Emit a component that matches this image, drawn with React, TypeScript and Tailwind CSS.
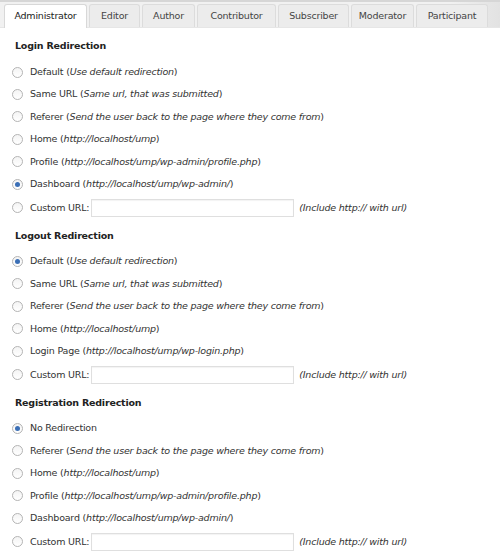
import React from 'react'

type Opt = { label: string; note?: string; checked?: boolean }

const tabs = [
  { name: 'Administrator', w: 'w-[83px]' },
  { name: 'Editor', w: 'w-[51px]' },
  { name: 'Author', w: 'w-[53px]' },
  { name: 'Contributor', w: 'w-[79px]' },
  { name: 'Subscriber', w: 'w-[71px]' },
  { name: 'Moderator', w: 'w-[63px]' },
  { name: 'Participant', w: 'w-[72px]' },
]

const sections: { title: string; options: Opt[] }[] = [
  {
    title: 'Login Redirection',
    options: [
      { label: 'Default', note: 'Use default redirection' },
      { label: 'Same URL', note: 'Same url, that was submitted' },
      { label: 'Referer', note: 'Send the user back to the page where they come from' },
      { label: 'Home', note: 'http://localhost/ump' },
      { label: 'Profile', note: 'http://localhost/ump/wp-admin/profile.php' },
      { label: 'Dashboard', note: 'http://localhost/ump/wp-admin/', checked: true },
    ],
  },
  {
    title: 'Logout Redirection',
    options: [
      { label: 'Default', note: 'Use default redirection', checked: true },
      { label: 'Same URL', note: 'Same url, that was submitted' },
      { label: 'Referer', note: 'Send the user back to the page where they come from' },
      { label: 'Home', note: 'http://localhost/ump' },
      { label: 'Login Page', note: 'http://localhost/ump/wp-login.php' },
    ],
  },
  {
    title: 'Registration Redirection',
    options: [
      { label: 'No Redirection', checked: true },
      { label: 'Referer', note: 'Send the user back to the page where they come from' },
      { label: 'Home', note: 'http://localhost/ump' },
      { label: 'Profile', note: 'http://localhost/ump/wp-admin/profile.php' },
      { label: 'Dashboard', note: 'http://localhost/ump/wp-admin/' },
    ],
  },
]

const Radio = ({ checked }: { checked?: boolean }) => (
  <span className="w-[11px] h-[11px] rounded-full border border-[#b4b4b4] bg-gradient-to-b from-[#f4f4f4] to-white flex items-center justify-center shrink-0">
    {checked && <span className="w-[5px] h-[5px] rounded-full bg-[#3b6fb6]" />}
  </span>
)

const Row = ({ opt }: { opt: Opt }) => (
  <div className="h-[22.4px] flex items-center">
    <Radio checked={opt.checked} />
    <span className="ml-[7px]">
      {opt.label}
      {opt.note && (
        <>
          {' ('}
          <i>{opt.note}</i>
          {')'}
        </>
      )}
    </span>
  </div>
)

const App = () => {
  return (
    <div
      className="w-[500px] h-[558px] bg-white text-[#333] text-[9.5px] tracking-[-0.2px] overflow-hidden"
      style={{ fontFamily: '"DejaVu Sans", Verdana, sans-serif' }}
    >
      <div className="h-[28px] bg-gradient-to-r from-[#f1f1f1] from-90% to-[#e2e2e2] border-t-2 border-[#d6d6d6] flex items-end pl-[4px] gap-[2px] border-b border-b-[#e6e6e6]">
        {tabs.map((t, i) => (
          <div
            key={t.name}
            className={
              t.w +
              (i === 0
                ? ' h-[24px] flex items-center justify-center bg-white border border-b-0 border-[#d8d8d8] rounded-t-[3px] text-[#222] -mb-px'
                : ' h-[23px] flex items-center justify-center bg-[#ececec] border border-b-0 border-[#dcdcdc] rounded-t-[3px] text-[#444]')
            }
          >
            {t.name}
          </div>
        ))}
      </div>
      <div className="pl-[12px]">
        {sections.map((s, i) => (
          <div key={s.title} className={i === 0 ? 'mt-[8px]' : 'mt-[6px]'}>
            <div className="h-5 flex items-center pl-[3px] font-bold text-[#222]">{s.title}</div>
            <div className={i === 0 ? 'mt-[5px]' : 'mt-1'}>
              {s.options.map((o) => (
                <Row key={o.label} opt={o} />
              ))}
              <div className="h-[25px] flex items-center">
                <Radio />
                <span className="ml-[7px]">Custom URL:</span>
                <input className="ml-[2px] w-[203px] h-[18px] border border-[#dfdfdf] shadow-[inset_0_1px_1px_rgba(0,0,0,0.05)] outline-none" />
                <i className="ml-[5px]">(Include http:// with url)</i>
              </div>
            </div>
          </div>
        ))}
      </div>
    </div>
  )
}

export default App
